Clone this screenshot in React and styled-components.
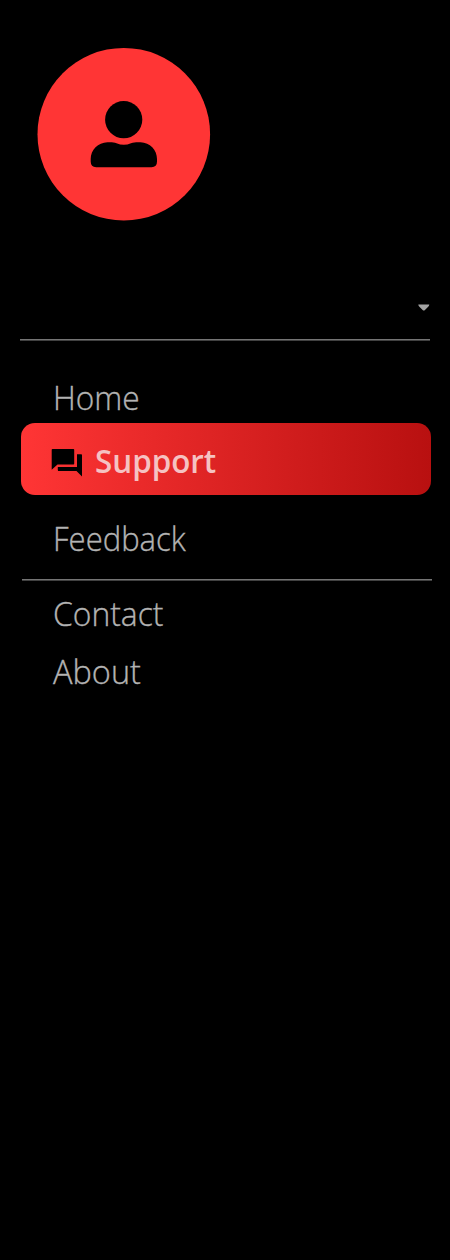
import React from "react";
import styled, { createGlobalStyle } from "styled-components";

const GlobalStyle = createGlobalStyle`
  * { box-sizing: border-box; }
  body { margin: 0; background: #000; }
`;

const Sidebar = styled.aside`
  width: 450px;
  height: 1260px;
  padding: 47px 19px 0 20px;
  background: #000;
  display: flex;
  flex-direction: column;
  font-family: "Open Sans", "Noto Sans", sans-serif;
  overflow: hidden;
`;

const Avatar = styled.svg`
  display: block;
  width: 174px;
  height: 174px;
  margin-left: 17px;
`;

const AccountRow = styled.div`
  height: 118px;
  padding: 83px 1px 0 0;
  display: flex;
  justify-content: flex-end;
`;

const Caret = styled.svg`
  display: block;
  width: 12px;
  height: 8px;
`;

const Divider = styled.hr`
  width: 410px;
  height: 2px;
  margin: 0 0 0 ${({ $inset }) => $inset || 0}px;
  flex: none;
  border: 0;
  border-top: 1px solid #747474;
  background: #414141;
`;

const Nav = styled.nav`
  display: flex;
  flex-direction: column;
  align-items: flex-start;
  padding-top: ${({ $top }) => $top}px;
`;

const Item = styled.a`
  height: ${({ $height }) => $height || 48}px;
  margin-left: 32.5px;
  color: #b3b3b3;
  font-size: 33.5px;
  font-weight: 300;
  -webkit-text-stroke: 0.35px #b3b3b3;
  line-height: 49px;
  white-space: nowrap;
  transform: scaleX(${({ $condense }) => $condense || 1});
  transform-origin: left;
`;

const ActiveItem = styled.a`
  width: 410px;
  height: 72px;
  margin: 2px 0 19px 1px;
  padding: 4px 30px 0;
  display: flex;
  align-items: center;
  border-radius: 14px;
  background: linear-gradient(90deg, #ff3535, #b81010);
`;

const ChatIcon = styled.svg`
  display: block;
  width: 32px;
  height: 30px;
  margin: 6px 11.5px 0 0;
`;

const ActiveLabel = styled.span`
  color: #f5c2c2;
  font-size: 33px;
  font-weight: 600;
  line-height: 48px;
  transform: scaleX(0.95);
  transform-origin: left;
`;

export default function App() {
  return (
    <>
      <GlobalStyle />
      <Sidebar>
        <Avatar viewBox="37 47 174 174">
          <circle cx="123.8" cy="134.2" r="86.3" fill="#ff3535" />
          <circle cx="123.7" cy="119.7" r="18.6" />
          <path d="M107.5 142.3C111 142.2 114 142.2 116.5 143.2Q123.8 146.2 131 143.2C134 142.2 137 142.2 140.500 142.3C150 142.600 157 150 157 159V161.500Q157 167.200 151.500 167.200H96.200Q90.700 167.200 90.700 161.500V159C90.700 150 98 142.600 107.500 142.300Z" />
        </Avatar>
        <AccountRow>
          <Caret viewBox="0 0 12 8">
            <path d="M.3 .6H11.300Q11.200 1.800 10.200 2.700L6.700 6.200Q5.800 7 4.900 6.200L1.400 2.700Q.4 1.800 .3 .6Z" fill="#a3a3a3" />
          </Caret>
        </AccountRow>
        <Divider />
        <Nav $top={32}>
          <Item $condense={0.945}>Home</Item>
          <ActiveItem>
            <ChatIcon viewBox="51 449 32 30">
              <path d="M52.500 449H73.500Q74.200 449 74.200 449.700V463.800Q74.200 464.500 73.500 464.500H57.500L51.700 469.800V449.800Q51.700 449 52.500 449Z" />
              <path d="M77 454.300H81.200Q82 454.300 82 455.100V476.400L76.500 471.100H59Q57.800 471.100 57.800 469.900V467H77Z" />
            </ChatIcon>
            <ActiveLabel>Support</ActiveLabel>
          </ActiveItem>
          <Item $height={65} $condense={0.926}>Feedback</Item>
        </Nav>
        <Divider $inset={2} />
        <Nav $top={8}>
          <Item $height={58} $condense={0.95}>Contact</Item>
          <Item $condense={0.97}>About</Item>
        </Nav>
      </Sidebar>
    </>
  );
}
